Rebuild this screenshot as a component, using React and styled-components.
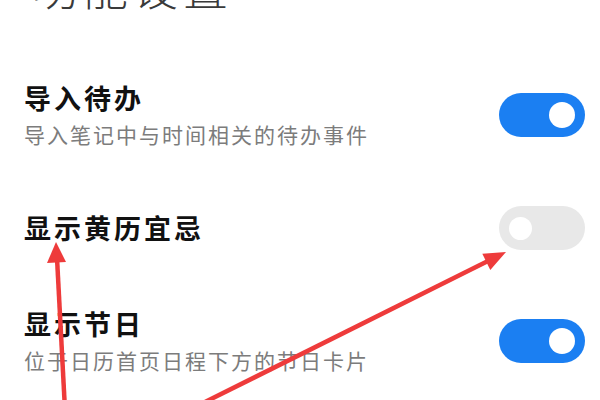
import React from "react";
import styled, { createGlobalStyle } from "styled-components";

const GlobalStyle = createGlobalStyle`
  html, body { margin: 0; padding: 0; background: #ffffff; }
  body { font-family: "Noto Sans CJK SC", "Noto Sans", sans-serif; }
  * { box-sizing: border-box; }
`;

const Page = styled.div`
  position: relative;
  width: 600px;
  height: 400px;
  overflow: hidden;
  background: #ffffff;
`;

const Header = styled.header`
  height: 52px;
  display: flex;
  align-items: flex-end;
  padding: 0 0 43px 33px;
`;

const Heading = styled.h1`
  margin: 0;
  font-size: 45px;
  line-height: 45px;
  font-weight: 300;
  letter-spacing: 5px;
  color: #3a3a3a;
  white-space: nowrap;
`;

const List = styled.div`
  display: flex;
  flex-direction: column;
`;

const Row = styled.div`
  display: flex;
  align-items: center;
  justify-content: space-between;
  padding: 28px 15px 28px 24px;
`;

const TextBlock = styled.div`
  display: flex;
  flex-direction: column;
`;

const Title = styled.div`
  font-size: 27px;
  line-height: 36px;
  font-weight: 600;
  letter-spacing: 3px;
  color: #111111;
  white-space: nowrap;
`;

const Subtitle = styled.div`
  margin-top: 3px;
  font-size: 21px;
  line-height: 31px;
  font-weight: 400;
  letter-spacing: 2px;
  color: #7c7c7c;
  white-space: nowrap;
`;

const Track = styled.div`
  width: 86px;
  height: 44px;
  border-radius: 22px;
  background: ${(p) => (p.$on ? "#1b7ff2" : "#e8e8e8")};
  display: flex;
  align-items: center;
  justify-content: ${(p) => (p.$on ? "flex-end" : "flex-start")};
  padding: 0 10px;
  flex-shrink: 0;
`;

const Knob = styled.div`
  width: ${(p) => (p.$on ? "26px" : "23px")};
  height: ${(p) => (p.$on ? "26px" : "23px")};
  border-radius: 50%;
  background: #ffffff;
`;

const Overlay = styled.svg`
  position: absolute;
  left: 0;
  top: 0;
  width: 600px;
  height: 400px;
  pointer-events: none;
`;

const Switch = ({ on }) => (
  <Track $on={on}>
    <Knob $on={on} />
  </Track>
);

const settings = [
  { title: "导入待办", sub: "导入笔记中与时间相关的待办事件", on: true },
  { title: "显示黄历宜忌", sub: null, on: false },
  { title: "显示节日", sub: "位于日历首页日程下方的节日卡片", on: true },
];

export default function App() {
  return (
    <>
      <GlobalStyle />
      <Page>
        <Header>
          <Heading>功能设置</Heading>
        </Header>
        <List>
          {settings.map((s) => (
            <Row key={s.title}>
              <TextBlock>
                <Title>{s.title}</Title>
                {s.sub && <Subtitle>{s.sub}</Subtitle>}
              </TextBlock>
              <Switch on={s.on} />
            </Row>
          ))}
        </List>
        <Overlay viewBox="0 0 600 400">
          <line x1="65" y1="410" x2="57" y2="258" stroke="#ee3b3b" strokeWidth="4.5" />
          <polygon points="56,242 47,263 66,262" fill="#ee3b3b" />
          <line x1="185" y1="412" x2="488" y2="261" stroke="#ee3b3b" strokeWidth="4.5" />
          <polygon points="506,252 490.3,269.9 482.3,253.7" fill="#ee3b3b" />
        </Overlay>
      </Page>
    </>
  );
}
